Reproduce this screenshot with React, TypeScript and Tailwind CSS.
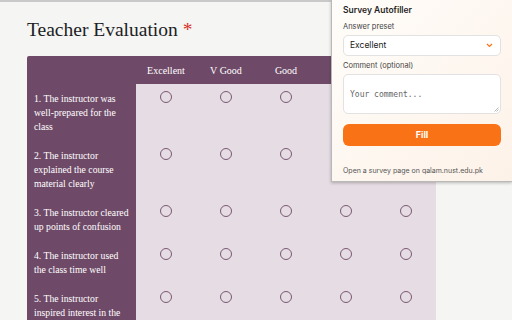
import React from "react";

const rows: string[] = [
  "1. The instructor was well-prepared for the class",
  "2. The instructor explained the course material clearly",
  "3. The instructor cleared up points of confusion",
  "4. The instructor used the class time well",
  "5. The instructor inspired interest in the subject",
];
const cols = ["Excellent", "V Good", "Good", "", ""];

function Radio() {
  return <div className="w-[12px] h-[12px] rounded-full border border-[#7a5873]" />;
}

export default function App() {
  return (
    <div className="relative w-[512px] h-[320px] overflow-hidden bg-[#f5f5f3]" style={{ fontFamily: '"Liberation Serif", serif' }}>
      <div className="h-[2px] bg-[#c9c9c9] w-full" />
      <div className="pl-[27px] pt-[16px]">
        <h1 className="text-[19.5px] leading-[24px] text-[#202124]">
          Teacher Evaluation <span className="text-[#d93025]">*</span>
        </h1>
        <div className="mt-[14px] w-[409px] bg-[#6f4a68] rounded-tl-[2px] rounded-tr-[2px]">
          <div className="grid grid-cols-[109px_repeat(5,60px)] h-[28px] items-center text-white text-[10px]">
            <div />
            {cols.map((c, i) => (
              <div key={i} className="text-center">{c}</div>
            ))}
          </div>
          {rows.map((r, i) => (
            <div key={i} className="grid grid-cols-[109px_300px]">
              <div className="pl-[7px] pr-[6px] pt-[8px] pb-[7px] text-[9.7px] leading-[14px] text-white">{r}</div>
              <div className="grid grid-cols-5 bg-[#e6dce3]">
                {cols.map((_, j) => (
                  <div key={j} className="flex justify-center pt-[7px]">
                    <Radio />
                  </div>
                ))}
              </div>
            </div>
          ))}
        </div>
      </div>

      {/* Extension popup */}
      <div
        className="absolute left-[331px] top-0 w-[181px] h-[182px] border-l border-b border-[#b9b9b9] bg-gradient-to-br from-[#fffdfa] to-[#fdf2e8] shadow-[0_1px_3px_rgba(0,0,0,0.25)] px-[11px] pt-[4px]"
        style={{ fontFamily: 'Inter, "Noto Sans", sans-serif' }}
      >
        <div className="text-[8.5px] leading-[12px] font-semibold text-[#1f1f1f]">Survey Autofiller</div>
        <div className="mt-[6px] text-[7.5px] leading-[10px] text-[#444]">Answer preset</div>
        <div className="mt-[3px] h-[21px] rounded-[5px] border border-[#e2e2e2] bg-white flex items-center justify-between px-[6px]">
          <span className="text-[8.5px] text-[#222]">Excellent</span>
          <svg width="7" height="5" viewBox="0 0 7 5" className="mr-[1px]">
            <path d="M1 1 L3.5 3.5 L6 1" fill="none" stroke="#f97316" strokeWidth="1.2" />
          </svg>
        </div>
        <div className="mt-[5px] text-[7.5px] leading-[10px] text-[#444]">Comment (optional)</div>
        <div className="relative mt-[3px] h-[40px] rounded-[5px] border border-[#e2e2e2] bg-white px-[6px] pt-[4px]">
          <span className="text-[8px] text-[#666]" style={{ fontFamily: '"DejaVu Sans Mono", monospace' }}>Your comment...</span>
          <svg width="5" height="5" viewBox="0 0 5 5" className="absolute right-[1px] bottom-[1px]">
            <path d="M0.5 4.5 L4.5 0.5 M2.5 4.5 L4.5 2.5" stroke="#999" strokeWidth="0.7" />
          </svg>
        </div>
        <div className="mt-[10px] h-[22px] rounded-[6px] bg-[#f97316] flex items-center justify-center text-white text-[9px] font-bold">
          Fill
        </div>
        <div className="mt-[20px] text-[7px] leading-[10px] text-[#555]">Open a survey page on qalam.nust.edu.pk</div>
      </div>
    </div>
  );
}
